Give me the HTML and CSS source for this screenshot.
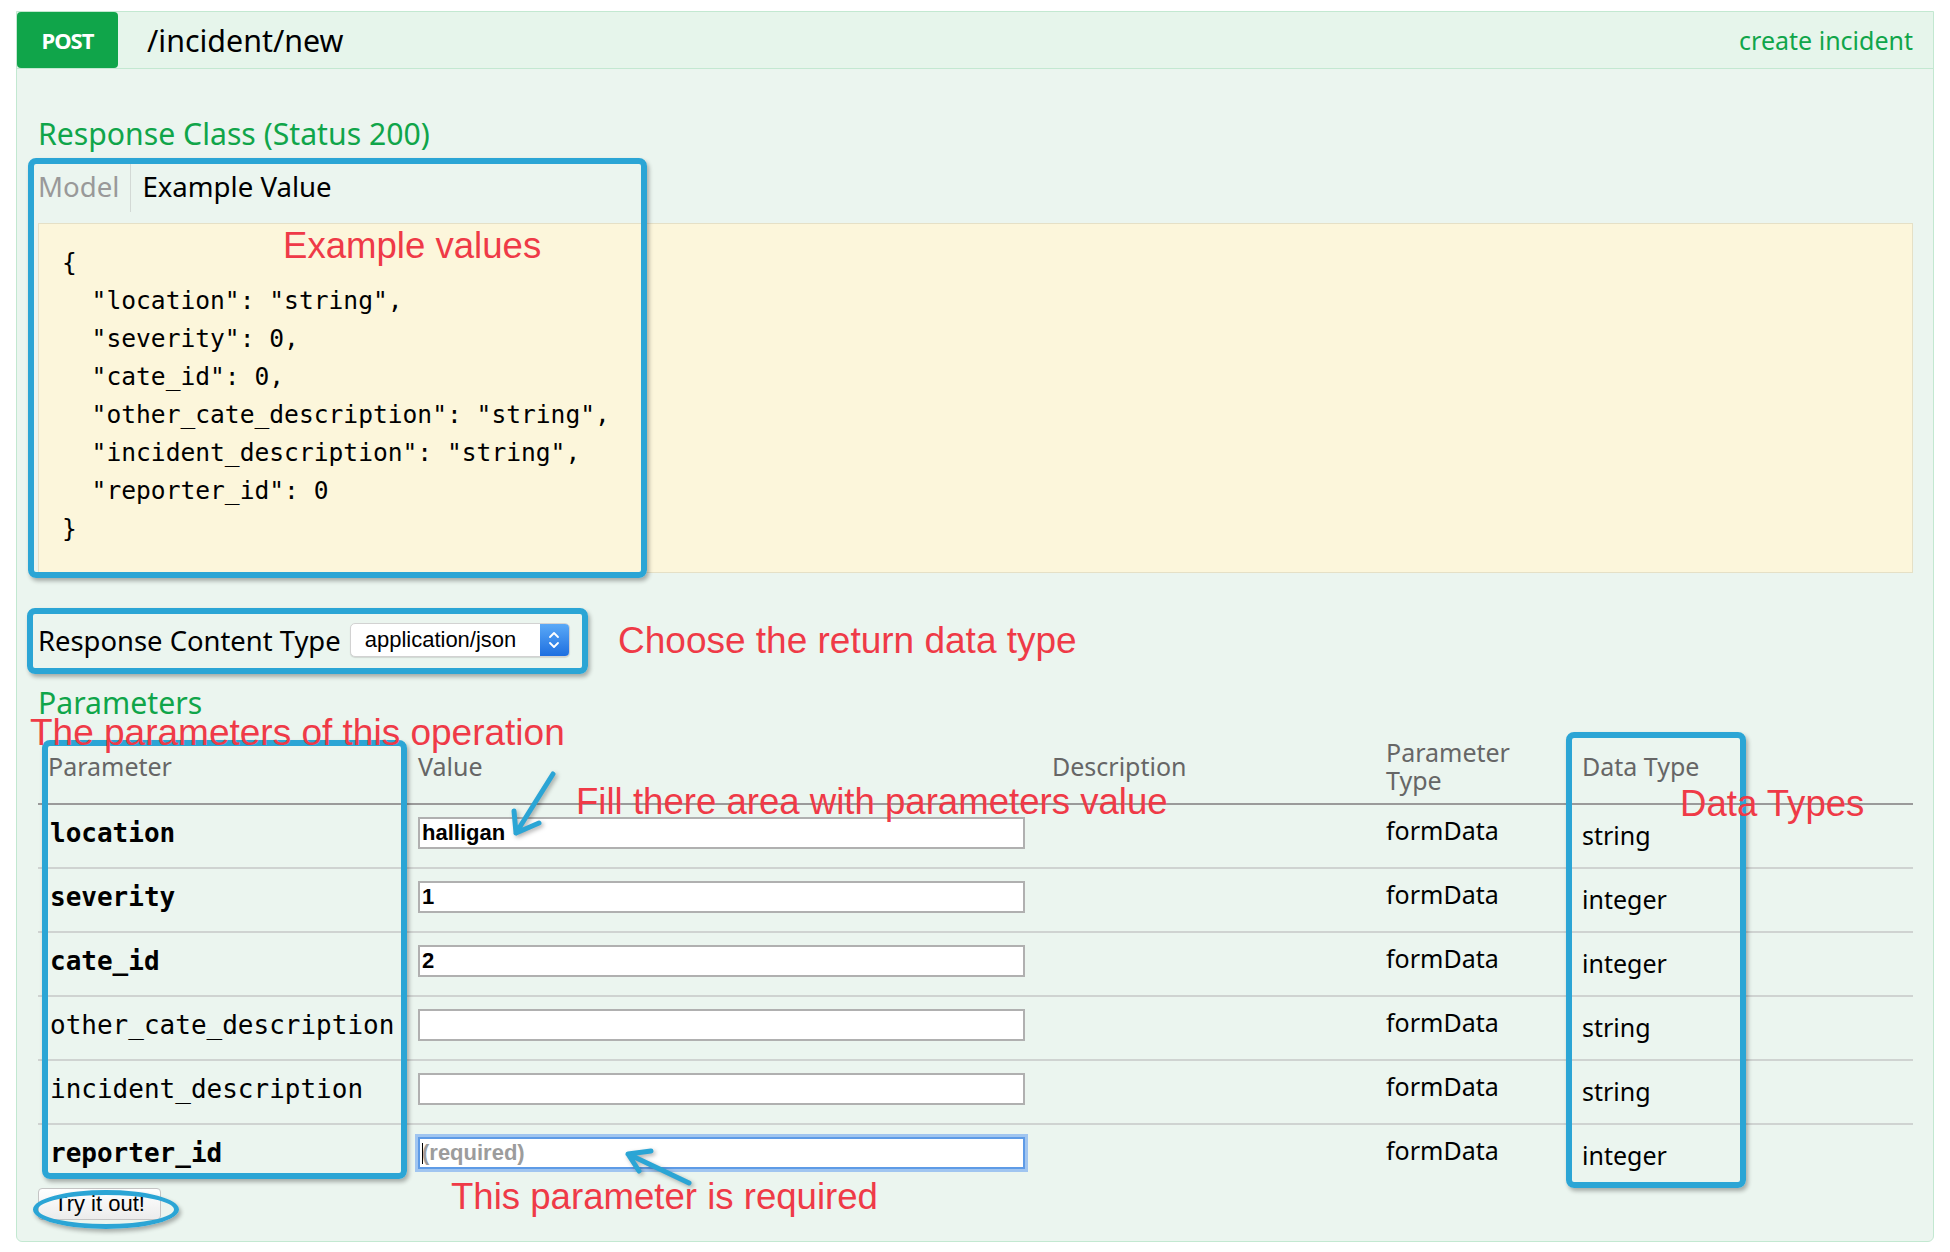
FILE: index.html
```html
<!DOCTYPE html>
<html lang="en">
<head>
<meta charset="utf-8">
<title>POST /incident/new</title>
<link rel="stylesheet" href="styles.css">
</head>
<body>
<div class="op">
  <div class="op-head">
    <span class="method">POST</span>
    <span class="path">/incident/new</span>
    <span class="summary">create incident</span>
  </div>
  <div class="op-body">
    <h4 class="sec-title">Response Class (Status 200)</h4>
    <div class="sig">
      <div class="tabs">
        <span class="tab tab-off">Model</span>
        <span class="tab tab-on">Example Value</span>
      </div>
<pre class="snippet">{
  "location": "string",
  "severity": 0,
  "cate_id": 0,
  "other_cate_description": "string",
  "incident_description": "string",
  "reporter_id": 0
}</pre>
    </div>

    <div class="ctype">
      <span class="ctype-label">Response Content Type</span>
      <div class="select">
        <span class="select-text">application/json</span>
        <span class="select-arrows">
          <svg width="14" height="22" viewBox="0 0 14 22"><path d="M3 8 L7 4 L11 8 M3 14 L7 18 L11 14" fill="none" stroke="#fff" stroke-width="1.8" stroke-linecap="round" stroke-linejoin="round"/></svg>
        </span>
      </div>
    </div>

    <h4 class="sec-title sec-params">Parameters</h4>
    <div class="params">
      <div class="prow phead">
        <div class="cell">Parameter</div>
        <div class="cell">Value</div>
        <div class="cell">Description</div>
        <div class="cell">Parameter<br>Type</div>
        <div class="cell">Data Type</div>
      </div>
      <div class="prow item first">
        <div class="cell name req">location</div>
        <div class="cell"><input class="field" type="text" value="halligan"></div>
        <div class="cell"></div>
        <div class="cell ptype">formData</div>
        <div class="cell dtype">string</div>
      </div>
      <div class="prow item">
        <div class="cell name req">severity</div>
        <div class="cell"><input class="field" type="text" value="1"></div>
        <div class="cell"></div>
        <div class="cell ptype">formData</div>
        <div class="cell dtype">integer</div>
      </div>
      <div class="prow item">
        <div class="cell name req">cate_id</div>
        <div class="cell"><input class="field" type="text" value="2"></div>
        <div class="cell"></div>
        <div class="cell ptype">formData</div>
        <div class="cell dtype">integer</div>
      </div>
      <div class="prow item">
        <div class="cell name">other_cate_description</div>
        <div class="cell"><input class="field" type="text" value=""></div>
        <div class="cell"></div>
        <div class="cell ptype">formData</div>
        <div class="cell dtype">string</div>
      </div>
      <div class="prow item">
        <div class="cell name">incident_description</div>
        <div class="cell"><input class="field" type="text" value=""></div>
        <div class="cell"></div>
        <div class="cell ptype">formData</div>
        <div class="cell dtype">string</div>
      </div>
      <div class="prow item last">
        <div class="cell name req">reporter_id</div>
        <div class="cell"><span class="focus-wrap"><input class="field field-focus" type="text" placeholder="(required)"></span></div>
        <div class="cell"></div>
        <div class="cell ptype">formData</div>
        <div class="cell dtype">integer</div>
      </div>
    </div>
    <div class="submit">
      <button class="try" type="button">Try it out!</button>
    </div>
  </div>

  <div class="notes">
    <div class="box box-example"></div>
    <div class="box box-ctype"></div>
    <div class="box box-param"></div>
    <div class="box box-dtype"></div>
    <div class="box box-try"></div>
    <svg class="arrows" width="1918" height="1231" viewBox="0 0 1918 1231">
      <g fill="none" stroke="#2ba5d5" stroke-width="5" stroke-linecap="round" stroke-linejoin="round">
        <path d="M536 762 L499 821 M497 799 L499 821 L522 811"/>
        <path d="M672 1171 L611 1142 M634 1139 L611 1142 L622 1159"/>
      </g>
    </svg>
    <span class="note note-example">Example values</span>
    <span class="note note-ctype">Choose the return data type</span>
    <span class="note note-params">The parameters of this operation</span>
    <span class="note note-fill">Fill there area with parameters value</span>
    <span class="note note-dtype">Data Types</span>
    <span class="note note-req">This parameter is required</span>
  </div>
</div>
</body>
</html>
```
FILE: styles.css
```css
* { box-sizing: border-box; }

body {
  margin: 0;
  background: #ffffff;
  font-family: "Noto Sans", "Open Sans", sans-serif;
  color: #000;
}

.op {
  position: relative;
  margin: 11px 16px 0;
  border: 1px solid #c3e8d1;
  border-radius: 0 0 6px 6px;
  background: #ebf5ef;
}

.op-head {
  display: flex;
  align-items: center;
  height: 57px;
  padding-right: 20px;
  background: #e6f5eb;
  border-bottom: 1px solid #c3e8d1;
}

.method {
  align-self: flex-start;
  display: flex;
  align-items: center;
  justify-content: center;
  width: 101px;
  height: 56px;
  background: #10a54a;
  color: #fff;
  border-radius: 4px;
  font-size: 22px;
  font-weight: 700;
  letter-spacing: -1px;
}

.path {
  margin-left: 29px;
  font-size: 30.4px;
}

.summary {
  margin-left: auto;
  font-size: 25px;
  color: #10a54a;
}

.op-body {
  padding: 47px 20px 21px 21px;
}

.sec-title {
  margin: 0;
  font-size: 30.2px;
  line-height: 36px;
  font-weight: 400;
  color: #10a54a;
}

.sig { margin-top: 11px; }

.tabs {
  display: flex;
  height: 49px;
  margin-bottom: 11px;
}

.tab {
  font-size: 27.6px;
  line-height: 36px;
  padding: 5px 11px 8px;
}

.tab-off {
  padding-left: 0;
  padding-right: 11px;
  color: #999;
  border-right: 1px solid #d3d9d5;
}

.tab-on { color: #000; }

.snippet {
  margin: 0;
  height: 350px;
  padding: 20px 23px 23px;
  background: #fcf6db;
  border: 1px solid #e5e0c6;
  font-family: "DejaVu Sans Mono", "Liberation Mono", monospace;
  font-size: 24.6px;
  line-height: 38px;
  color: #000;
}

.ctype {
  display: flex;
  align-items: center;
  gap: 9px;
  height: 34px;
  margin-top: 50px;
}

.ctype-label { font-size: 27.4px; }

.select {
  display: flex;
  align-items: center;
  width: 220px;
  height: 34px;
  padding-left: 14px;
  background: #fff;
  border: 1px solid #d2d2d2;
  border-radius: 5px;
  box-shadow: 0 1px 1px rgba(0, 0, 0, 0.12);
  font-family: "Liberation Sans", Arial, sans-serif;
  font-size: 22px;
  overflow: hidden;
}

.select-text { flex: 1; }

.select-arrows {
  display: flex;
  align-items: center;
  justify-content: center;
  width: 29px;
  height: 100%;
  background: linear-gradient(#5aa9f7, #1e6fe0);
}

.sec-params { margin-top: 28px; }

.params { margin-top: 16px; }

.prow {
  display: grid;
  grid-template-columns: 370px 634px 334px 196px 1fr;
}

.phead {
  height: 66px;
  padding-bottom: 8px;
  align-items: center;
  color: #666;
  font-size: 25px;
  line-height: 28px;
}

.cell { padding-left: 10px; }

.item {
  height: 64px;
  padding-top: 12px;
  align-items: start;
  border-top: 2px solid #cfd3d1;
  font-size: 25px;
  line-height: 32px;
}

.item.first { border-top-color: #9a9a9a; }
.item.last { height: 62px; }

.name {
  padding-left: 12px;
  font-family: "DejaVu Sans Mono", "Liberation Mono", monospace;
  font-size: 26px;
  white-space: nowrap;
}

.req { font-weight: 700; }

.ptype { line-height: 26px; }

.dtype { padding-top: 2px; }

.field {
  display: block;
  width: 607px;
  height: 32px;
  margin: 0;
  padding: 0 2px;
  background: #fff;
  border: 2px solid #b0b0b0;
  border-radius: 0;
  font-family: "Liberation Sans", Arial, sans-serif;
  font-size: 22px;
  font-weight: 700;
  color: #000;
  outline: none;
}

.focus-wrap {
  position: relative;
  display: block;
  width: 607px;
}

.focus-wrap::before {
  content: "";
  position: absolute;
  left: 4px;
  top: 6px;
  width: 1px;
  height: 21px;
  background: #000;
}

.field-focus {
  border-color: #5e9be6;
  box-shadow: 0 0 0 3px rgba(110, 165, 240, 0.6);
}

.field-focus::placeholder {
  color: #9c9c9c;
  font-weight: 700;
}

.submit { margin-top: 3px; }

.try {
  width: 123px;
  height: 32px;
  padding: 0;
  background: linear-gradient(#ffffff, #ececec);
  border: 1px solid #c4c4c4;
  border-radius: 4px;
  font-family: "Liberation Sans", Arial, sans-serif;
  font-size: 22px;
  color: #000;
}

/* annotation overlay */
.notes {
  position: absolute;
  left: 0;
  top: 0;
  width: 1918px;
  height: 1231px;
  pointer-events: none;
}

.box {
  position: absolute;
  border: 6px solid #2ba5d5;
  border-radius: 8px;
  box-shadow: 2px 3px 4px rgba(0, 0, 0, 0.3);
}

.box-example { left: 11px; top: 146px; width: 619px; height: 420px; }
.box-ctype { left: 10px; top: 596px; width: 561px; height: 66px; }
.box-param { left: 25px; top: 728px; width: 365px; height: 439px; }
.box-dtype { left: 1549px; top: 720px; width: 180px; height: 456px; }
.box-try { left: 16px; top: 1178px; width: 146px; height: 39px; border-radius: 50%; border-width: 5px; }

.arrows {
  position: absolute;
  left: 0;
  top: 0;
  filter: drop-shadow(2px 2px 2px rgba(0, 0, 0, 0.3));
}

.note {
  position: absolute;
  font-family: "Liberation Sans", Arial, sans-serif;
  font-size: 36.6px;
  line-height: 1;
  color: #ef3a47;
  white-space: nowrap;
}

.note-example { left: 266px; top: 216px; }
.note-ctype { left: 601px; top: 610px; font-size: 37px; }
.note-params { left: 13px; top: 702px; font-size: 37px; }
.note-fill { left: 559px; top: 772px; }
.note-dtype { left: 1663px; top: 774px; }
.note-req { left: 434px; top: 1167px; }
```
